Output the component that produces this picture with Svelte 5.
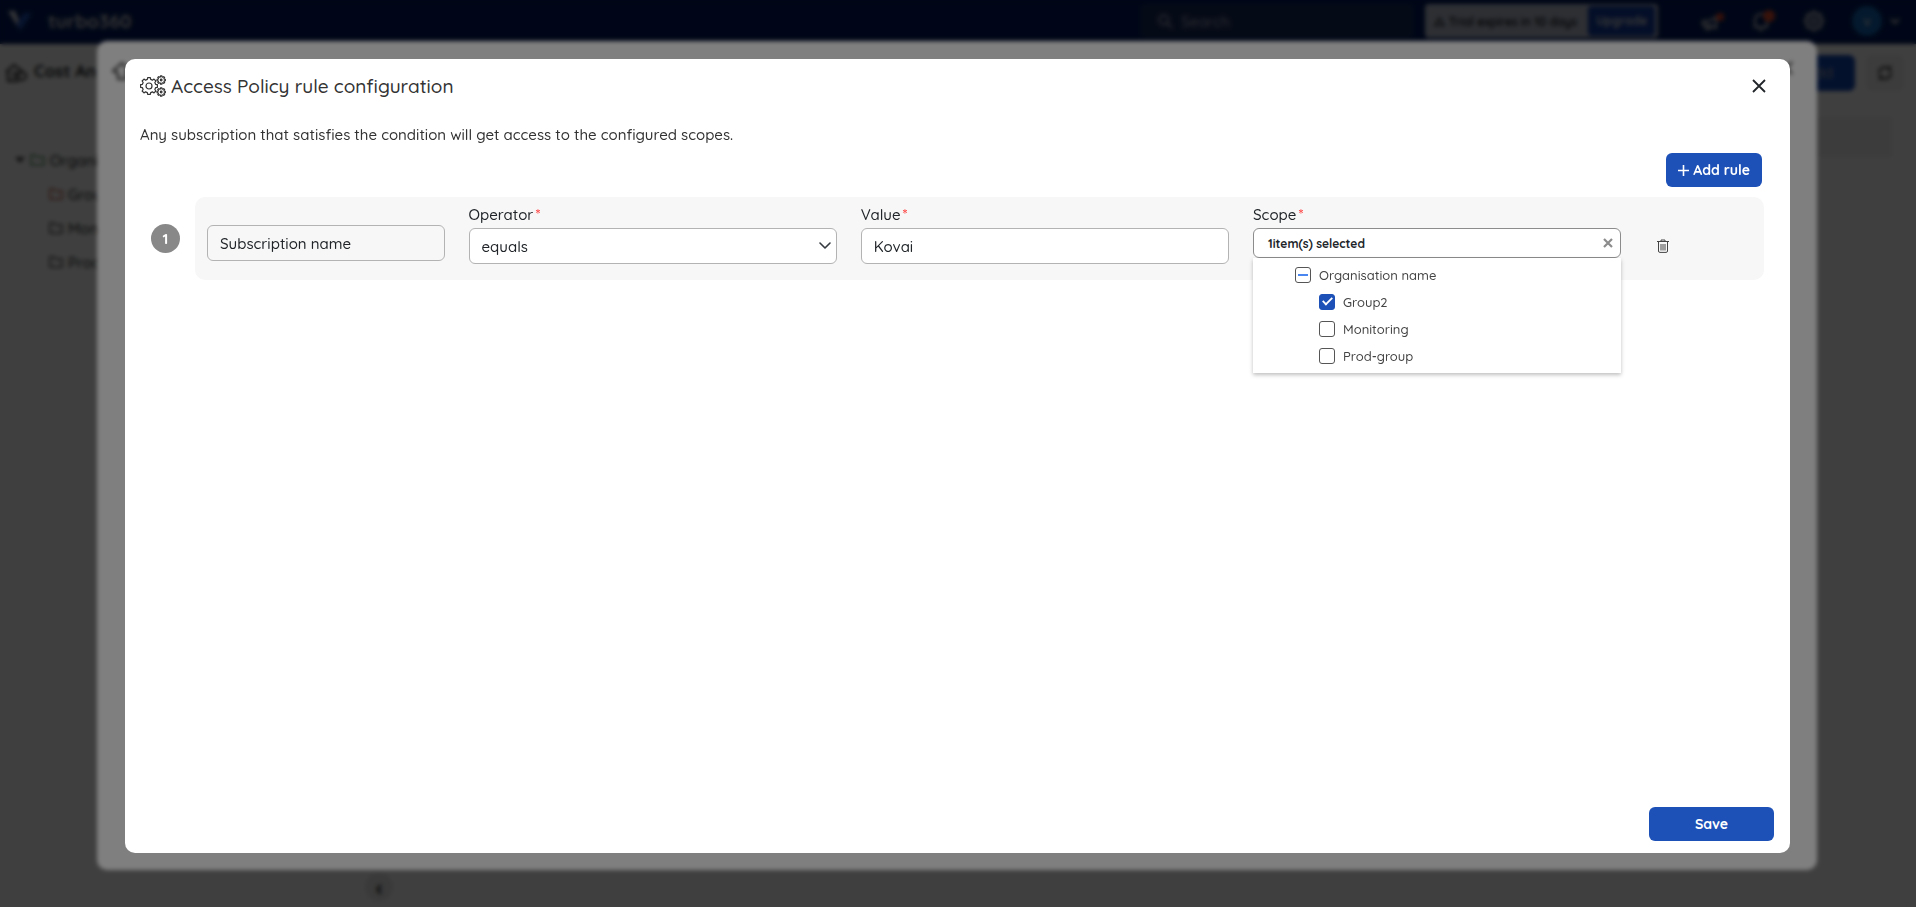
<script lang="ts">
    let operator = "equals";
    let value = "Kovai";

    let groups = [
        { id: "group2", name: "Group2", checked: true },
        { id: "monitoring", name: "Monitoring", checked: false },
        { id: "prod", name: "Prod-group", checked: false },
    ];

    const folders = [
        { name: "Group2", color: "#c98078" },
        { name: "Monitoring", color: "#777" },
        { name: "Prod-group", color: "#777" },
    ];

    $: selected = groups.filter((g) => g.checked).length;
    $: all = selected === groups.length;
    $: some = selected > 0 && !all;

    function toggleAll(event) {
        const checked = event.currentTarget.checked;
        groups = groups.map((g) => ({ ...g, checked }));
    }

    function clear() {
        groups = groups.map((g) => ({ ...g, checked: false }));
    }

    // outline of a cog wheel with the given number of teeth
    function cog(cx: number, cy: number, outer: number, inner: number, teeth: number) {
        const step = (Math.PI * 2) / teeth;
        const points = [];
        for (let i = 0; i < teeth; i++) {
            const a = i * step - Math.PI / 2;
            for (const [r, d] of [
                [inner, -0.32],
                [outer, -0.2],
                [outer, 0.2],
                [inner, 0.32],
            ]) {
                const x = cx + r * Math.cos(a + d * step);
                const y = cy + r * Math.sin(a + d * step);
                points.push(`${x.toFixed(2)} ${y.toFixed(2)}`);
            }
        }
        return `M${points.join("L")}Z`;
    }
</script>

<div class="page">
    <header class="topbar">
        <svg class="logo" width="24" height="20" viewBox="0 0 24 20">
            <path d="M0 0h7l5 12-2 4z" fill="#d5d9e2" />
            <path d="M12 20 9 12 16 2h8z" fill="#1d4fb8" />
        </svg>
        <span class="brand">turbo360</span>
        <div class="search">
            <svg width="16" height="16" viewBox="0 0 14 14" fill="none" stroke="#aab" stroke-width="1.6">
                <circle cx="6" cy="6" r="4" /><path d="m9 9 4 4" />
            </svg>
            Search
        </div>
        <div class="trial">
            <span class="trial_text">△ Trial expires in 10 days</span>
            <span class="upgrade">Upgrade</span>
        </div>
        <div class="tools">
            <svg width="24" height="24" viewBox="0 0 24 24" fill="none" stroke="#ccc" stroke-width="2">
                <path d="M3 12h6l7-4v11l-7-3H3zM6 16v4h4v-4" />
                <circle cx="20" cy="8" r="4" fill="#d8402a" stroke="none" />
            </svg>
            <svg width="24" height="28" viewBox="0 0 24 28" fill="none" stroke="#ccc" stroke-width="2">
                <path d="M3 20V13a6 6 0 0 1 12 0v7zM7 23h4" />
                <circle cx="17" cy="9" r="6" fill="#e04a2c" stroke="none" />
            </svg>
            <svg width="20" height="20" viewBox="0 0 20 20" fill="none" stroke="#ccc" stroke-width="2">
                <path d={cog(10, 10, 9, 7, 8)} /><circle cx="10" cy="10" r="3" />
            </svg>
            <span class="avatar">v</span>
            <svg class="caret" width="10" height="8" viewBox="0 0 10 8" fill="none" stroke="#ccc" stroke-width="2">
                <path d="m1 2 4 4 4-4" />
            </svg>
        </div>
    </header>

    <div class="titlebar">
        <svg width="22" height="20" viewBox="0 0 22 20" fill="none" stroke="#222" stroke-width="2">
            <path d="M1 9 9 2l8 6M3 8v10h11M7 10h7M7 14h6" /><circle cx="17" cy="13" r="4" />
        </svg>
        <span class="heading">Cost Analysis</span>
        <span class="add">Add</span>
        <span class="refresh">
            <svg width="18" height="18" viewBox="0 0 18 18" fill="none" stroke="#333" stroke-width="2">
                <path d="M3 9a6 6 0 0 1 11-3V2M15 9a6 6 0 0 1-11 3v4" />
            </svg>
        </span>
    </div>

    <div class="content">
        <div class="sidebar">
            <div class="folder root">
                <svg width="10" height="8" viewBox="0 0 10 8"><path d="M0 1h10L5 7z" fill="#444" /></svg>
                <svg width="15" height="12" viewBox="0 0 15 12" fill="none" stroke="#7fae8a" stroke-width="2">
                    <path d="M1 11V1h4l2 2h7v8z" />
                </svg>
                Organisation name
            </div>
            {#each folders as folder}
                <div class="folder">
                    <svg width="14" height="12" viewBox="0 0 14 12" fill="none" stroke={folder.color} stroke-width="2">
                        <path d="M1 11V1h4l2 2h6v8z" />
                    </svg>
                    {folder.name}
                </div>
            {/each}
            <span class="collapse">‹</span>
        </div>
        <div class="panel"><div class="panel_head"></div></div>
    </div>
</div>

<div class="backdrop outer">
    <div class="sheet">
        <svg width="20" height="20" viewBox="0 0 20 20" fill="none" stroke="#333" stroke-width="2">
            <path d="M1 10 10 2l9 8h-5v8H6v-6z" />
        </svg>
        <svg width="14" height="14" viewBox="0 0 14 14" stroke="#333" stroke-width="2"><path d="m1 1 12 12M13 1 1 13" /></svg>
    </div>
</div>

<div class="backdrop inner">
    <div class="modal" role="dialog" aria-modal="true" aria-labelledby="modal_title">
        <div class="modal_header">
            <svg width="26" height="22" viewBox="0 0 26 22" fill="none" stroke="#333" stroke-width="1.2">
                <path d={cog(9, 11, 8.5, 6.8, 8)} stroke-linejoin="round" />
                <circle cx="9" cy="11" r="3" />
                <path d={cog(21.2, 5, 4.2, 3.2, 8)} stroke-linejoin="round" />
                <circle cx="21.2" cy="5" r="0.8" />
                <path d={cog(21.2, 17, 4.2, 3.2, 8)} stroke-linejoin="round" />
                <circle cx="21.2" cy="17" r="0.8" />
            </svg>
            <h1 id="modal_title">Access Policy rule configuration</h1>
            <button class="close" aria-label="Close">
                <svg width="14" height="14" viewBox="0 0 14 14" stroke="#212529" stroke-width="1.8">
                    <path d="m1 1 12 12M13 1 1 13" />
                </svg>
            </button>
        </div>

        <p class="hint">
            Any subscription that satisfies the condition will get access to the configured scopes.
        </p>

        <div class="actions">
            <button class="primary add_rule">
                <svg width="11" height="11" viewBox="0 0 11 11" stroke="#fff" stroke-width="1.6">
                    <path d="M5.5 0v11M0 5.5h11" />
                </svg>
                Add rule
            </button>
        </div>

        <div class="rule">
            <span class="rule_index">1</span>
            <div class="rule_card">
                <div class="cell">
                    <input
                        class="field subject"
                        type="text"
                        aria-label="Property"
                        value="Subscription name"
                        disabled
                    />
                </div>
                <div class="cell">
                    <label for="operator">Operator<span class="required">*</span></label>
                    <div class="select">
                        <select id="operator" class="field" bind:value={operator}>
                            <option value="equals">equals</option>
                            <option value="contains">contains</option>
                        </select>
                        <svg width="12" height="8" viewBox="0 0 12 8" fill="none" stroke="#343a40" stroke-width="1.6">
                            <path d="m1 1 5 5 5-5" stroke-linecap="round" stroke-linejoin="round" />
                        </svg>
                    </div>
                </div>
                <div class="cell">
                    <label for="value">Value<span class="required">*</span></label>
                    <input id="value" class="field" type="text" bind:value />
                </div>
                <div class="cell">
                    <label for="scope">Scope<span class="required">*</span></label>
                    <div class="scope">
                        <div class="scope_box">
                            <button id="scope" class="scope_value" aria-expanded="true">
                                {selected}item(s) selected
                            </button>
                            <button class="scope_clear" aria-label="Clear selection" on:click={clear}>
                                <svg width="10" height="10" viewBox="0 0 10 10" stroke="#8c8c8c" stroke-width="2.2">
                                    <path d="m1 1 8 8M9 1 1 9" />
                                </svg>
                            </button>
                        </div>
                        <div class="dropdown">
                            <label class="node">
                                <input type="checkbox" checked={all} indeterminate={some} on:change={toggleAll} />
                                Organisation name
                            </label>
                            {#each groups as group (group.id)}
                                <label class="node child">
                                    <input type="checkbox" bind:checked={group.checked} />
                                    {group.name}
                                </label>
                            {/each}
                        </div>
                    </div>
                </div>
                <div class="cell">
                    <button class="delete" aria-label="Delete rule">
                        <svg width="12" height="14" viewBox="0 0 12 14" fill="none" stroke="#444" stroke-width="1">
                            <path d="M0 2.5h12M4 2.5V1h4v1.5M1.5 2.5v9.5q0 1.4 1.4 1.4h6.2q1.4 0 1.4-1.4V2.5M4 5v6.5M6 5v6.5M8 5v6.5" />
                        </svg>
                    </button>
                </div>
            </div>
        </div>

        <div class="modal_footer">
            <button class="primary save">Save</button>
        </div>
    </div>
</div>

<style>
    :global(body) {
        font-family: Quicksand, Inter, sans-serif;
        font-size: 15px;
        font-weight: 500;
        color: #212529;
        background-color: #fff;
    }

    button {
        font-family: inherit;
        border: none;
        background: none;
        padding: 0;
        cursor: pointer;
    }

    svg {
        display: block;
        flex: none;
    }

    .page {
        display: flex;
        flex-direction: column;
        height: 100vh;
        overflow: hidden;
    }

    .topbar {
        display: flex;
        align-items: center;
        height: 44px;
        padding: 0 16px 2px 8px;
        box-sizing: border-box;
        background-color: #001a5c;
        color: #ccc;
    }

    .brand {
        margin-left: 16px;
        font-size: 19px;
        font-weight: 700;
        margin-right: auto;
        color: #ccc;
    }

    .search {
        display: flex;
        align-items: center;
        gap: 8px;
        width: 256px;
        height: 34px;
        padding-left: 16px;
        margin-right: 12px;
        border-radius: 4px;
        background-color: #172a5c;
        color: #aab;
    }

    .trial {
        display: flex;
        align-items: center;
        height: 34px;
        padding: 0 3px 0 8px;
        border-radius: 4px;
        background-color: #b4bccf;
        color: #111;
        white-space: nowrap;
    }

    .trial_text {
        width: 155px;
        font-size: 12px;
        font-weight: 600;
    }

    .upgrade {
        padding: 0 8px;
        border-radius: 4px;
        line-height: 30px;
        font-size: 12px;
        font-weight: 700;
        background-color: #103aa0;
        color: #ddd;
    }

    .tools {
        display: flex;
        align-items: center;
        gap: 28px;
        margin-left: 42px;
    }

    .avatar {
        width: 30px;
        line-height: 30px;
        border-radius: 50%;
        text-align: center;
        background-color: #1266b8;
        color: #ddd;
    }

    .caret {
        margin-left: -20px;
    }

    .titlebar {
        display: flex;
        align-items: center;
        height: 36px;
        padding: 11px 12px 12px 5px;
    }

    .heading {
        margin: 0 auto 0 7px;
        font-size: 17px;
        line-height: 36px;
        padding-bottom: 4px;
        font-weight: 700;
    }

    .add {
        width: 84px;
        line-height: 36px;
        padding-right: 22px;
        box-sizing: border-box;
        border-radius: 6px;
        text-align: right;
        background-color: #1046b4;
        color: #aaa;
    }

    .refresh {
        display: flex;
        align-items: center;
        justify-content: center;
        width: 38px;
        height: 36px;
        margin-left: 11px;
        border-radius: 6px;
        background-color: #f0f0f0;
    }

    .content {
        display: flex;
        flex: 1;
    }

    .sidebar {
        position: relative;
        width: 379px;
        padding-top: 40px;
    }

    .folder {
        display: flex;
        align-items: center;
        gap: 5px;
        height: 34px;
        padding-left: 49px;
    }

    .root {
        padding-left: 15px;
    }

    .collapse {
        position: absolute;
        right: -14px;
        bottom: 6px;
        width: 28px;
        line-height: 28px;
        border-radius: 50%;
        text-align: center;
        font-size: 22px;
        font-weight: 700;
        background-color: #e8e8e8;
    }

    .panel {
        flex: 1;
        margin-right: 9px;
        border-right: 1px solid #f4f4f4;
    }

    .panel_head {
        height: 40px;
        margin: 14px 14px 0;
        background-color: #f2f2f2;
    }

    .backdrop {
        position: fixed;
        inset: 0;
        display: flex;
        background-color: rgba(0, 0, 0, 0.5);
    }

    .outer {
        padding: 41px 99px 37px 97px;
    }

    .inner {
        padding: 59px 126px 54px 125px;
        backdrop-filter: blur(2px);
    }

    .sheet {
        flex: 1;
        display: flex;
        justify-content: space-between;
        align-items: flex-start;
        padding: 20px 24px 20px 15px;
        border-radius: 10px;
        background-color: #fff;
    }

    .modal {
        flex: 1;
        display: flex;
        flex-direction: column;
        border-radius: 10px;
        background-color: #fff;
    }

    .modal_header {
        display: flex;
        align-items: center;
        gap: 5px;
        padding: 15px 24px 0 15px;
    }

    h1 {
        margin: 0 auto 0 0;
        font-size: 19px;
        line-height: 24px;
        font-weight: 500;
        color: #333;
    }

    .hint {
        margin: 27px 15px 0;
        line-height: 20px;
        color: #333;
    }

    .actions {
        display: flex;
        justify-content: flex-end;
        padding: 8px 28px 10px;
    }

    .primary {
        height: 34px;
        border-radius: 6px;
        font-size: 14px;
        font-weight: 700;
        color: #fff;
        background-color: #1d51b8;
    }

    .add_rule {
        display: flex;
        align-items: center;
        gap: 4px;
        padding: 0 12px;
    }

    .save {
        width: 125px;
    }

    .rule {
        display: flex;
        align-items: center;
        gap: 15px;
        padding: 0 26px;
    }

    .rule_index {
        width: 29px;
        line-height: 29px;
        border-radius: 50%;
        text-align: center;
        font-weight: 700;
        background-color: #888;
        color: #fff;
    }

    .rule_card {
        flex: 1;
        display: grid;
        grid-template-columns: 2fr 3fr 3fr 3fr 1fr;
        padding: 7px 0 16px;
        border-radius: 10px;
        background-color: #f7f7f7;
    }

    .cell {
        min-width: 0;
        padding: 0 12px;
    }

    .cell > label {
        display: block;
        margin-bottom: 2px;
        line-height: 22px;
    }

    .required {
        margin-left: 2px;
        color: #f33;
    }

    .field {
        display: block;
        width: 100%;
        height: 36px;
        padding: 0 12px;
        box-sizing: border-box;
        border: 1px solid #b3b3b3;
        border-radius: 6px;
        font-family: inherit;
        font-size: 15px;
        font-weight: 500;
        color: #212529;
        background-color: #fff;
    }

    .subject {
        margin-top: 21px;
        background-color: #f7f7f7;
    }

    .select {
        position: relative;
    }

    .select select {
        appearance: none;
    }

    .select svg {
        position: absolute;
        right: 6px;
        top: 14px;
        pointer-events: none;
    }

    .scope {
        position: relative;
    }

    .scope_box {
        display: flex;
        align-items: center;
        height: 30px;
        padding: 0 7px 0 14px;
        box-sizing: border-box;
        border: 1px solid #8c8c8c;
        border-radius: 6px;
        background-color: #fff;
    }

    .scope_value {
        flex: 1;
        text-align: left;
        font-size: 12px;
        font-weight: 700;
        color: #212529;
    }

    .dropdown {
        position: absolute;
        left: 0;
        right: 0;
        top: 100%;
        display: grid;
        gap: 1px;
        padding: 4px 0;
        background-color: #fff;
        box-shadow: 0 2px 4px rgba(0, 0, 0, 0.25);
    }

    .node {
        display: flex;
        align-items: center;
        gap: 8px;
        padding-left: 42px;
        font-size: 13px;
        line-height: 26px;
        color: #444;
    }

    .child {
        padding-left: 66px;
    }

    .node input {
        appearance: none;
        display: flex;
        align-items: center;
        justify-content: center;
        width: 16px;
        height: 16px;
        margin: 0;
        box-sizing: border-box;
        border: 1px solid #555;
        border-radius: 3px;
        background-color: #fff;
    }

    .node input:indeterminate::after {
        content: "";
        width: 10px;
        height: 2px;
        background-color: #4a86f0;
    }

    .node input:checked {
        border-color: #1d51b8;
        background-color: #1d51b8;
    }

    .node input:checked::after {
        content: "";
        width: 9px;
        height: 4px;
        margin-bottom: 4px;
        border-left: 2px solid #fff;
        border-bottom: 2px solid #fff;
        box-sizing: content-box;
        transform: rotate(-45deg) scale(0.9);
    }

    .delete {
        display: block;
        margin: 35px 0 0 12px;
    }

    .modal_footer {
        display: flex;
        justify-content: flex-end;
        margin-top: auto;
        padding: 12px 16px;
    }
</style>
